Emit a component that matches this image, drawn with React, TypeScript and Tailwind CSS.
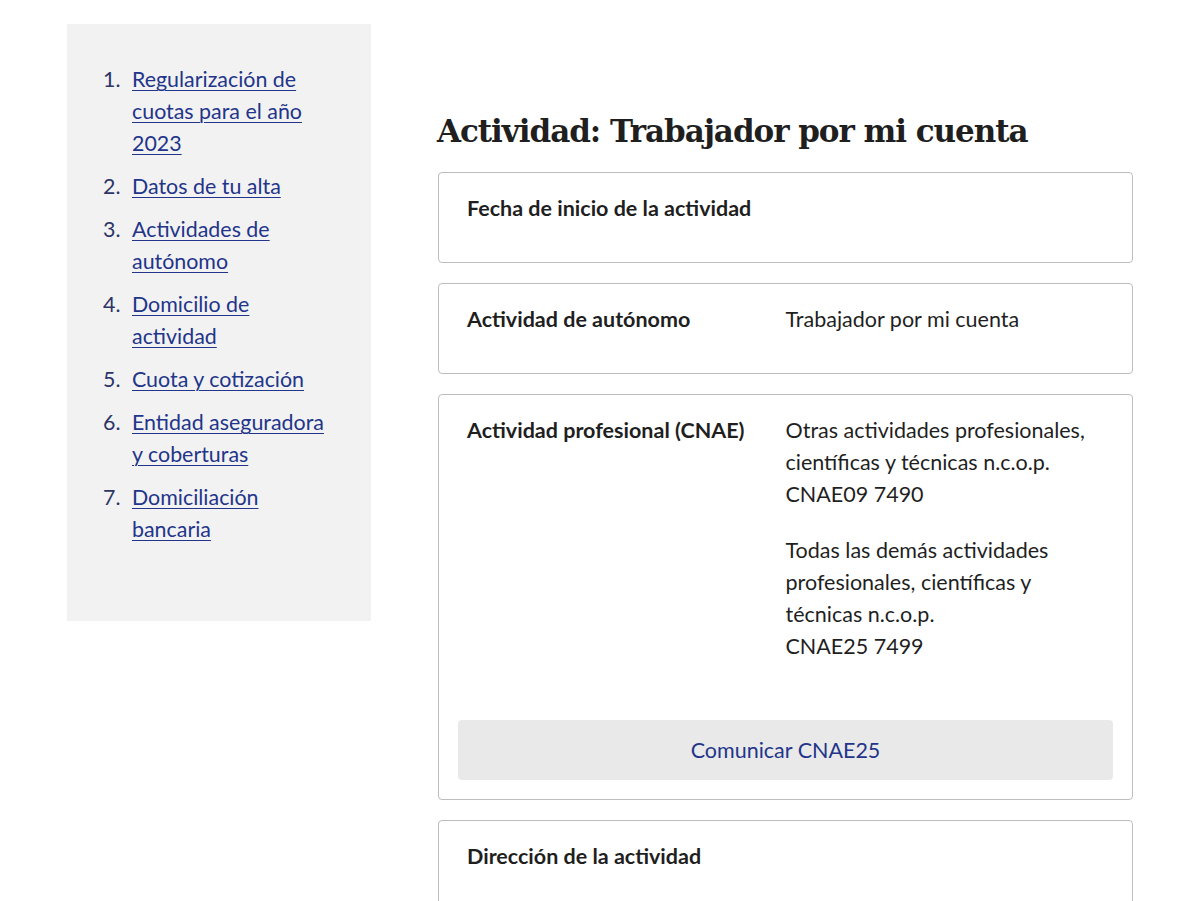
import React from "react";

const steps = [
  "Regularización de cuotas para el año 2023",
  "Datos de tu alta",
  "Actividades de autónomo",
  "Domicilio de actividad",
  "Cuota y cotización",
  "Entidad aseguradora y coberturas",
  "Domiciliación bancaria",
];

function Card({ children }: { children: React.ReactNode }) {
  return (
    <div className="rounded-[4px] border border-[#bdbdbd] bg-white px-[28px] pt-[19px] pb-[38px]">
      {children}
    </div>
  );
}

export default function App() {
  return (
    <div
      className="min-h-[901px] bg-white text-[#1f1f1f]"
      style={{ fontFamily: "Lato, 'Noto Sans', sans-serif" }}
    >
      <div className="mx-auto flex w-[1066px] items-start gap-[66px] pt-[24px]">
        {/* Step navigation */}
        <nav className="h-[597px] w-[304px] shrink-0 bg-[#f2f2f2] pt-[39px] pl-[36px]">
          <ol className="flex flex-col gap-[11px]">
            {steps.map((s, i) => (
              <li key={s} className="flex text-[21.4px] leading-[32px]">
                <span className="w-[29px] shrink-0 text-[#2c3566]">{i + 1}.</span>
                <a
                  href="#"
                  className="w-[200px] text-[#23358a] underline decoration-1 underline-offset-[3px]"
                >
                  {s}
                </a>
              </li>
            ))}
          </ol>
        </nav>

        {/* Main content */}
        <main className="w-[696px] pt-[86px]">
          <h1
            className="mb-[20px] text-[31px] leading-[42px] font-bold tracking-[-1.05px] text-[#1f1f1f]"
            style={{ fontFamily: "'DejaVu Serif', 'Liberation Serif', serif" }}
          >
            Actividad: Trabajador por mi cuenta
          </h1>

          <div className="flex flex-col gap-[20px] pl-[1px] text-[21.5px] leading-[32px]">
            <Card>
              <div className="grid grid-cols-2">
                <div className="font-bold">Fecha de inicio de la actividad</div>
                <div />
              </div>
            </Card>

            <Card>
              <div className="grid grid-cols-2">
                <div className="font-bold">Actividad de autónomo</div>
                <div>Trabajador por mi cuenta</div>
              </div>
            </Card>

            <div className="rounded-[4px] border border-[#bdbdbd] bg-white px-[19px] pt-[19px] pb-[19px]">
              <div className="grid grid-cols-2 px-[9px]">
                <div className="font-bold">Actividad profesional (CNAE)</div>
                <div className="flex flex-col gap-[24px]">
                  <p>
                    Otras actividades profesionales, científicas y técnicas n.c.o.p.
                    <br />
                    CNAE09 7490
                  </p>
                  <p>
                    Todas las demás actividades profesionales, científicas y técnicas n.c.o.p.
                    <br />
                    CNAE25 7499
                  </p>
                </div>
              </div>
              <button className="mt-[58px] flex h-[60px] w-full items-center justify-center rounded-[4px] bg-[#e9e9e9] text-[#23358a]">
                Comunicar CNAE25
              </button>
            </div>

            <Card>
              <div className="grid grid-cols-2">
                <div className="font-bold">Dirección de la actividad</div>
                <div />
              </div>
            </Card>
          </div>
        </main>
      </div>
    </div>
  );
}
